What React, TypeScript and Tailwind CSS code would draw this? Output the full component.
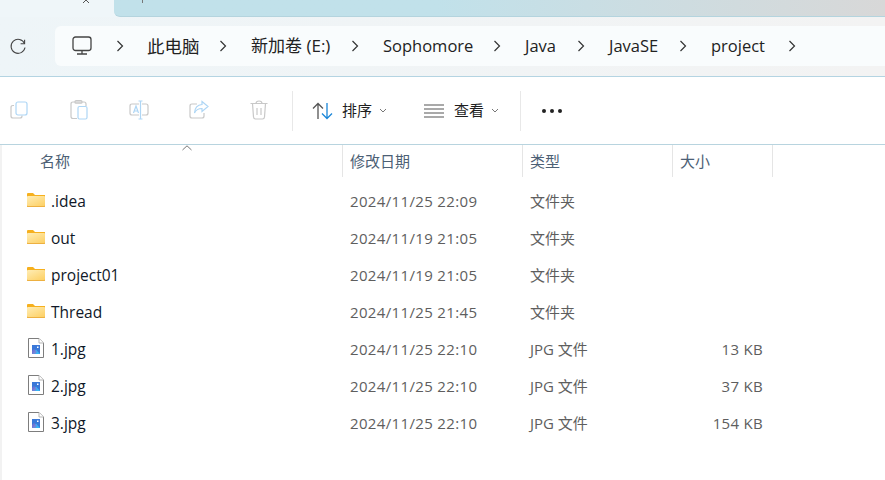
import React from "react";

const font = { fontFamily: '"Open Sans","Noto Sans CJK SC",sans-serif' };

function Chevron() {
  return (
    <svg width="8" height="12" viewBox="0 0 8 12" className="shrink-0" fill="none" stroke="#333" strokeWidth="1.2">
      <path d="M1.5 1 L6.5 6 L1.5 11" />
    </svg>
  );
}

function Small() {
  return (
    <svg width="8" height="5" viewBox="0 0 8 5" fill="none" stroke="#777" strokeWidth="1">
      <path d="M1 1 L4 4 L7 1" />
    </svg>
  );
}

function Folder() {
  return (
    <svg width="18" height="14" viewBox="0 0 18 14">
      <path d="M0 1 Q0 0 1 0 H6 L8 2 H18 V13 Q18 14 17 14 H1 Q0 14 0 13 Z" fill="#f6b01e" />
      <rect x="0" y="3" width="18" height="11" rx="1" fill="#edb041" />
      <rect x="0" y="3" width="18" height="10" rx="1" fill="url(#fg)" />
      <defs>
        <linearGradient id="fg" x1="0" y1="0" x2="0.8" y2="1">
          <stop offset="0" stopColor="#ffedb5" />
          <stop offset="1" stopColor="#fdd26a" />
        </linearGradient>
      </defs>
    </svg>
  );
}

function Jpg() {
  return (
    <svg width="16" height="20" viewBox="0 0 16 20">
      <path d="M0.5 0.5 H11 L15.5 5 V19.5 H0.5 Z" fill="#fff" stroke="#7d7d7d" />
      <path d="M11 0.5 V5 H15.5" fill="#fff" stroke="#b5b5b5" />
      <rect x="4" y="7" width="8" height="9" fill="#3a78d8" />
      <path d="M4 16 L8 11.5 L12 16 Z" fill="#36b6f4" />
      <path d="M4 13 L6 11 L9 14 L7 16 H4 Z" fill="#8a72d0" opacity="0.7" />
      <rect x="9" y="8.5" width="1.5" height="1.5" fill="#fff" />
    </svg>
  );
}

const files = [
  { n: ".idea", d: "2024/11/25 22:09", t: "文件夹", s: "", f: true },
  { n: "out", d: "2024/11/19 21:05", t: "文件夹", s: "", f: true },
  { n: "project01", d: "2024/11/19 21:05", t: "文件夹", s: "", f: true },
  { n: "Thread", d: "2024/11/25 21:45", t: "文件夹", s: "", f: true },
  { n: "1.jpg", d: "2024/11/25 22:10", t: "JPG 文件", s: "13 KB", f: false },
  { n: "2.jpg", d: "2024/11/25 22:10", t: "JPG 文件", s: "37 KB", f: false },
  { n: "3.jpg", d: "2024/11/25 22:10", t: "JPG 文件", s: "154 KB", f: false },
];

const crumbs: [string, string, string][] = [
  ["此电脑", "w-[104px]", "text-[17.5px]"],
  ["新加卷 (E:)", "w-[132px]", "text-[17px]"],
  ["Sophomore", "w-[142px]", "text-[16.5px]"],
  ["Java", "w-[84px]", "text-[16.5px]"],
  ["JavaSE", "w-[102px]", "text-[16.5px]"],
  ["project", "w-[109px]", "text-[16.5px]"],
];

export default function App() {
  return (
    <div style={font} className="w-[885px] h-[480px] overflow-hidden bg-white flex flex-col">
      {/* tab strip */}
      <div className="h-[17px] shrink-0 flex bg-[#eff6f9]">
        <div className="w-[114px] relative">
          <svg width="10" height="6" viewBox="0 0 10 6" className="absolute left-[82px] top-0" fill="none" stroke="#555" strokeWidth="1">
            <path d="M1 -3 L7 3 M7 -3 L1 3" />
          </svg>
        </div>
        <div className="flex-1 rounded-bl-[6px] bg-gradient-to-r from-[#c1e1ea] from-[42%] to-[#d8d8d8] relative border-b border-[#b4d4de]">
          <div className="absolute left-[28px] top-0 w-px h-[3px] bg-[#777]" />
        </div>
      </div>

      {/* address row */}
      <div className="h-[60px] shrink-0 flex items-center bg-gradient-to-r from-[#eef5f8] to-[#f3f3f3] border-b border-[#b4d4e2]">
        <div className="w-[55px] shrink-0 flex pl-[9px]">
          <svg width="18" height="18" viewBox="0 0 18 18" fill="none" stroke="#444" strokeWidth="1.1">
            <path d="M15.5 5.5 A7 7 0 1 0 16 9.5" />
            <path d="M15.6 1.8 V5.8 H11.6" />
          </svg>
        </div>
        <div className="flex-1 h-[40px] -mt-px rounded-l-[6px] bg-[#f9fcfd] flex items-center pl-[17px] text-[#222]">
          <svg width="20" height="20" viewBox="0 0 20 20" fill="none" stroke="#444" strokeWidth="1.3" className="shrink-0">
            <rect x="1" y="1" width="18" height="13.5" rx="2.5" />
            <path d="M10 14.5 V18 M5 18 H15" />
          </svg>
          <div className="w-[24px] shrink-0" />
          <Chevron />
          <div className="w-[23px] shrink-0" />
          {crumbs.map(([c, w, t]) => (
            <div key={c} className={`flex items-center shrink-0 justify-between pr-[24px] ${w}`}>
              <span className={`whitespace-nowrap ${t}`}>{c}</span>
              <Chevron />
            </div>
          ))}
        </div>
      </div>

      {/* toolbar */}
      <div className="h-[68px] shrink-0 flex items-center border-b border-[#b8d4df] pl-[9px]">
        <div className="flex items-center gap-[40px] w-[283px] shrink-0 -mt-px">
          <div className="w-[20px] flex justify-center">
            <svg width="18" height="18" viewBox="0 0 18 18" fill="none" strokeWidth="1.2">
              <path d="M4 4.5 H3 Q1 4.5 1 6.5 V15 Q1 17 3 17 H10 Q12 17 12 15 V14.5" stroke="#c8c8c8" />
              <rect x="6" y="1" width="11" height="13" rx="2" stroke="#aed6f5" />
            </svg>
          </div>
          <div className="w-[20px] flex justify-center">
            <svg width="18" height="20" viewBox="0 0 18 20" fill="none" strokeWidth="1.2">
              <path d="M7 18.5 H3 Q1 18.5 1 16.5 V4 Q1 2 3 2 H14 Q16 2 16 4 V6" stroke="#c8c8c8" />
              <rect x="5" y="0.7" width="7" height="2.5" rx="1" stroke="#c8c8c8" />
              <rect x="8" y="6.5" width="9" height="12.5" rx="1.5" stroke="#aed6f5" />
            </svg>
          </div>
          <div className="w-[20px] flex justify-center">
            <svg width="20" height="20" viewBox="0 0 20 20" fill="none" strokeWidth="1.2">
              <path d="M13 4 H17 Q19 4 19 6 V13 Q19 15 17 15 H13 M10 4 H3 Q1 4 1 6 V13 Q1 15 3 15 H10" stroke="#c8c8c8" />
              <path d="M11.5 1 V19 M9.5 1 H13.5 M9.5 19 H13.5 M4.5 13 L7 6 L9.5 13 M5.5 11 H8.5" stroke="#aed6f5" />
            </svg>
          </div>
          <div className="w-[20px] flex justify-center">
            <svg width="20" height="20" viewBox="0 0 20 20" fill="none" strokeWidth="1.2">
              <path d="M8 4 H3 Q1 4 1 6 V16 Q1 18 3 18 H13 Q15 18 15 16 V13" stroke="#c8c8c8" />
              <path d="M13 1.5 L19 6.5 L13 11.5 V8.5 Q7.5 8.5 5.5 13 Q6 5 13 4.5 Z" stroke="#aed6f5" />
            </svg>
          </div>
          <div className="w-[20px] flex justify-center">
            <svg width="18" height="20" viewBox="0 0 18 20" fill="none" stroke="#c8c8c8" strokeWidth="1.2">
              <path d="M0.5 3.5 H17.5 M6 3.5 Q6 1 9 1 Q12 1 12 3.5 M2.5 3.5 L3.5 17 Q3.7 19 5.5 19 H12.5 Q14.3 19 14.5 17 L15.5 3.5 M7 8 V15 M11 8 V15" />
            </svg>
          </div>
        </div>
        <div className="w-px h-[40px] bg-[#e8e8e8] shrink-0" />
        <div className="flex items-center pl-[19px] w-[131px] shrink-0 text-[15px] text-[#1f1f1f]">
          <svg width="21" height="18" viewBox="0 0 21 18" fill="none" strokeWidth="1.3" className="mr-[9px] shrink-0">
            <path d="M6 17 V1.5 M1 6.5 L6 1.5 L11 6.5" stroke="#555" />
            <path d="M15 1 V16.5 M10 11.5 L15 16.5 L20 11.5" stroke="#1a86d8" />
          </svg>
          <span className="mr-[7px]">排序</span>
          <Small />
        </div>
        <div className="flex items-center w-[96px] shrink-0 text-[15px] text-[#1f1f1f]">
          <svg width="20" height="14" viewBox="0 0 20 14" fill="none" stroke="#555" strokeWidth="1.2" className="mr-[10px] shrink-0">
            <path d="M0 1 H20 M0 5 H20 M0 9 H20 M0 13 H20" />
          </svg>
          <span className="mr-[7px]">查看</span>
          <Small />
        </div>
        <div className="w-px h-[40px] bg-[#e8e8e8] shrink-0" />
        <div className="flex gap-[4px] pl-[21px]">
          <div className="w-[4px] h-[4px] rounded-full bg-[#222]" />
          <div className="w-[4px] h-[4px] rounded-full bg-[#222]" />
          <div className="w-[4px] h-[4px] rounded-full bg-[#222]" />
        </div>
      </div>

      {/* list */}
      <div className="flex-1 border-l-2 border-[#f2f2f2]">
        <div className="flex h-[32px] text-[15px] text-[#4c6075] leading-[32px]">
          <div className="w-[341px] pl-[38px] border-r border-[#e5e5e5] relative">
            名称
            <svg width="10" height="6" viewBox="0 0 10 6" fill="none" stroke="#777" className="absolute left-[180px] top-0">
              <path d="M0.5 5 L5 0.8 L9.5 5" />
            </svg>
          </div>
          <div className="w-[180px] pl-[7px] border-r border-[#e5e5e5]">修改日期</div>
          <div className="w-[150px] pl-[7px] border-r border-[#e5e5e5]">类型</div>
          <div className="w-[100px] pl-[7px] border-r border-[#e5e5e5]">大小</div>
        </div>
        <div className="pt-[6px]">
          {files.map((f) => (
            <div key={f.n} className="flex items-center h-[37px] text-[15px] text-[#5e5e5e]">
              <div className="w-[341px] flex items-center pl-[25px] text-[15.5px] text-[#101828]">
                <div className="w-[24px] shrink-0 flex -mt-[3px]">{f.f ? <Folder /> : <span className="ml-[1px]"><Jpg /></span>}</div>
                {f.n}
              </div>
              <div className="w-[180px] pl-[7px] tracking-[0.35px]">{f.d}</div>
              <div className="w-[150px] pl-[7px]">{f.t}</div>
              <div className="w-[90px] text-right tracking-[0.3px]">{f.s}</div>
            </div>
          ))}
        </div>
      </div>
    </div>
  );
}
